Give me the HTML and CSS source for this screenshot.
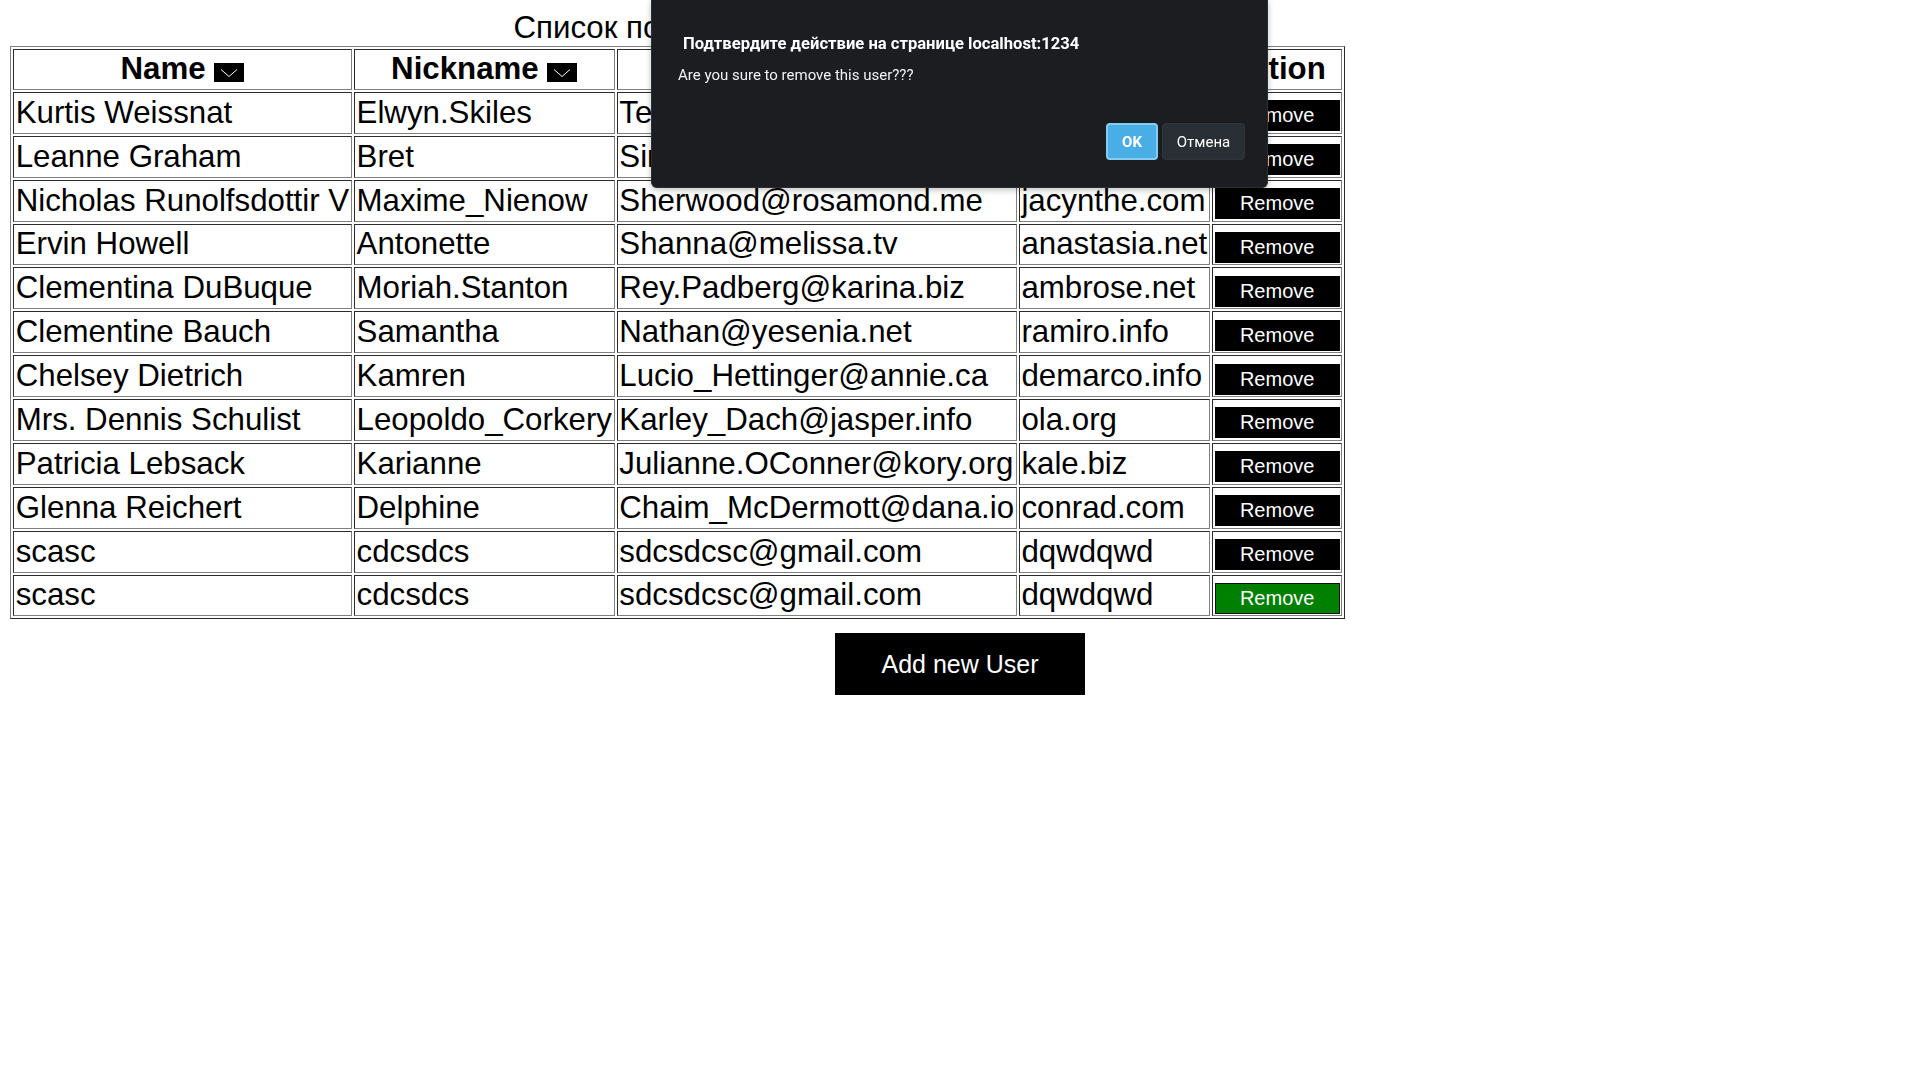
FILE: index.html
```html
<!DOCTYPE html>
<html lang="ru">
<head>
<meta charset="utf-8">
<title>Users</title>
<link rel="stylesheet" href="styles.css">
</head>
<body>
<table class="users">
  <caption>Список пользователей</caption>
  <thead>
    <tr>
      <th>Name <span class="sort"><svg width="30" height="19" viewBox="0 0 30 19"><rect width="30" height="19" fill="#000"/><polyline points="7,6.5 15,13.5 23,6.5" fill="none" stroke="#fff" stroke-width="1"/></svg></span></th>
      <th>Nickname <span class="sort"><svg width="30" height="19" viewBox="0 0 30 19"><rect width="30" height="19" fill="#000"/><polyline points="7,6.5 15,13.5 23,6.5" fill="none" stroke="#fff" stroke-width="1"/></svg></span></th>
      <th>Email</th>
      <th>Website</th>
      <th>Action</th>
    </tr>
  </thead>
  <tbody>
    <tr><td>Kurtis Weissnat</td><td>Elwyn.Skiles</td><td>Telly.Hoeger@billy.biz</td><td>elvis.io</td><td><button class="remove">Remove</button></td></tr>
    <tr><td>Leanne Graham</td><td>Bret</td><td>Sincere@april.biz</td><td>hildegard.org</td><td><button class="remove">Remove</button></td></tr>
    <tr><td>Nicholas Runolfsdottir V</td><td>Maxime_Nienow</td><td>Sherwood@rosamond.me</td><td>jacynthe.com</td><td><button class="remove">Remove</button></td></tr>
    <tr><td>Ervin Howell</td><td>Antonette</td><td>Shanna@melissa.tv</td><td>anastasia.net</td><td><button class="remove">Remove</button></td></tr>
    <tr><td>Clementina DuBuque</td><td>Moriah.Stanton</td><td>Rey.Padberg@karina.biz</td><td>ambrose.net</td><td><button class="remove">Remove</button></td></tr>
    <tr><td>Clementine Bauch</td><td>Samantha</td><td>Nathan@yesenia.net</td><td>ramiro.info</td><td><button class="remove">Remove</button></td></tr>
    <tr><td>Chelsey Dietrich</td><td>Kamren</td><td>Lucio_Hettinger@annie.ca</td><td>demarco.info</td><td><button class="remove">Remove</button></td></tr>
    <tr><td>Mrs. Dennis Schulist</td><td>Leopoldo_Corkery</td><td>Karley_Dach@jasper.info</td><td>ola.org</td><td><button class="remove">Remove</button></td></tr>
    <tr><td>Patricia Lebsack</td><td>Karianne</td><td>Julianne.OConner@kory.org</td><td>kale.biz</td><td><button class="remove">Remove</button></td></tr>
    <tr><td>Glenna Reichert</td><td>Delphine</td><td>Chaim_McDermott@dana.io</td><td>conrad.com</td><td><button class="remove">Remove</button></td></tr>
    <tr><td>scasc</td><td>cdcsdcs</td><td>sdcsdcsc@gmail.com</td><td>dqwdqwd</td><td><button class="remove">Remove</button></td></tr>
    <tr><td>scasc</td><td>cdcsdcs</td><td>sdcsdcsc@gmail.com</td><td>dqwdqwd</td><td><button class="remove hover">Remove</button></td></tr>
  </tbody>
</table>
<button class="add">Add new User</button>

<div class="dialog">
  <div class="dialog-title">Подтвердите действие на странице localhost:1234</div>
  <div class="dialog-msg">Are you sure to remove this user???</div>
  <div class="dialog-actions">
    <button class="btn-ok">OK</button>
    <button class="btn-cancel">Отмена</button>
  </div>
</div>
</body>
</html>
```
FILE: styles.css
```css
html, body {
  background: #fff;
}
body {
  margin: 10px;
  font-family: "Liberation Sans", Arial, sans-serif;
  color: #000;
}
.users {
  border: 1px outset #808080;
  border-spacing: 2.5px;
  font-size: 31.25px;
}
.users caption {
  line-height: 36px;
}
.users th,
.users td {
  border: 1px inset #808080;
  padding: 1.45px 1.7px;
  text-align: left;
  white-space: nowrap;
}
.users th {
  text-align: center;
  font-weight: bold;
}
.sort {
  display: inline-block;
  vertical-align: -3px;
  line-height: 0;
}
.remove {
  width: 125px;
  font-family: "Liberation Sans", Arial, sans-serif;
  font-size: 20px;
  line-height: 23px;
  padding: 3px 0;
  background: #000;
  color: #fff;
  border: 1px solid #000;
  margin: 0;
  cursor: pointer;
}
.remove.hover {
  background: #008000;
  border: 1px solid #111;
}
.add {
  display: block;
  margin: 14px auto 0;
  width: 250px;
  height: 62px;
  background: #000;
  color: #fff;
  border: 0;
  font-family: "Liberation Sans", Arial, sans-serif;
  font-size: 25px;
}
.dialog {
  position: fixed;
  top: 0;
  left: 651px;
  width: 617px;
  height: 188px;
  box-sizing: border-box;
  background: #1c1d21;
  border: 1px solid #2c2e33;
  border-top: 0;
  border-radius: 0 0 6px 6px;
  box-shadow: 0 2px 6px rgba(0,0,0,0.25);
  padding: 34px 22px 0 26px;
  font-family: Roboto, "Noto Sans", sans-serif;
  color: #fff;
  display: flex;
  flex-direction: column;
}
.dialog-title {
  font-weight: bold;
  font-size: 16.6px;
  line-height: 20px;
  margin-left: 5px;
}
.dialog-msg {
  font-size: 15px;
  line-height: 18px;
  margin-top: 12px;
  color: #f2f2f2;
}
.dialog-actions {
  display: flex;
  justify-content: flex-end;
  gap: 4px;
  margin-top: 39px;
}
.btn-ok,
.btn-cancel {
  height: 37px;
  border-radius: 4px;
  font-family: Roboto, "Noto Sans", sans-serif;
  font-size: 15px;
  color: #fff;
  cursor: pointer;
}
.btn-ok {
  width: 52px;
  background: #4aaee6;
  border: 2px solid #86cbf0;
  font-weight: bold;
}
.btn-cancel {
  width: 83px;
  background: #2a2e35;
  border: 1px solid #30343b;
}
```
